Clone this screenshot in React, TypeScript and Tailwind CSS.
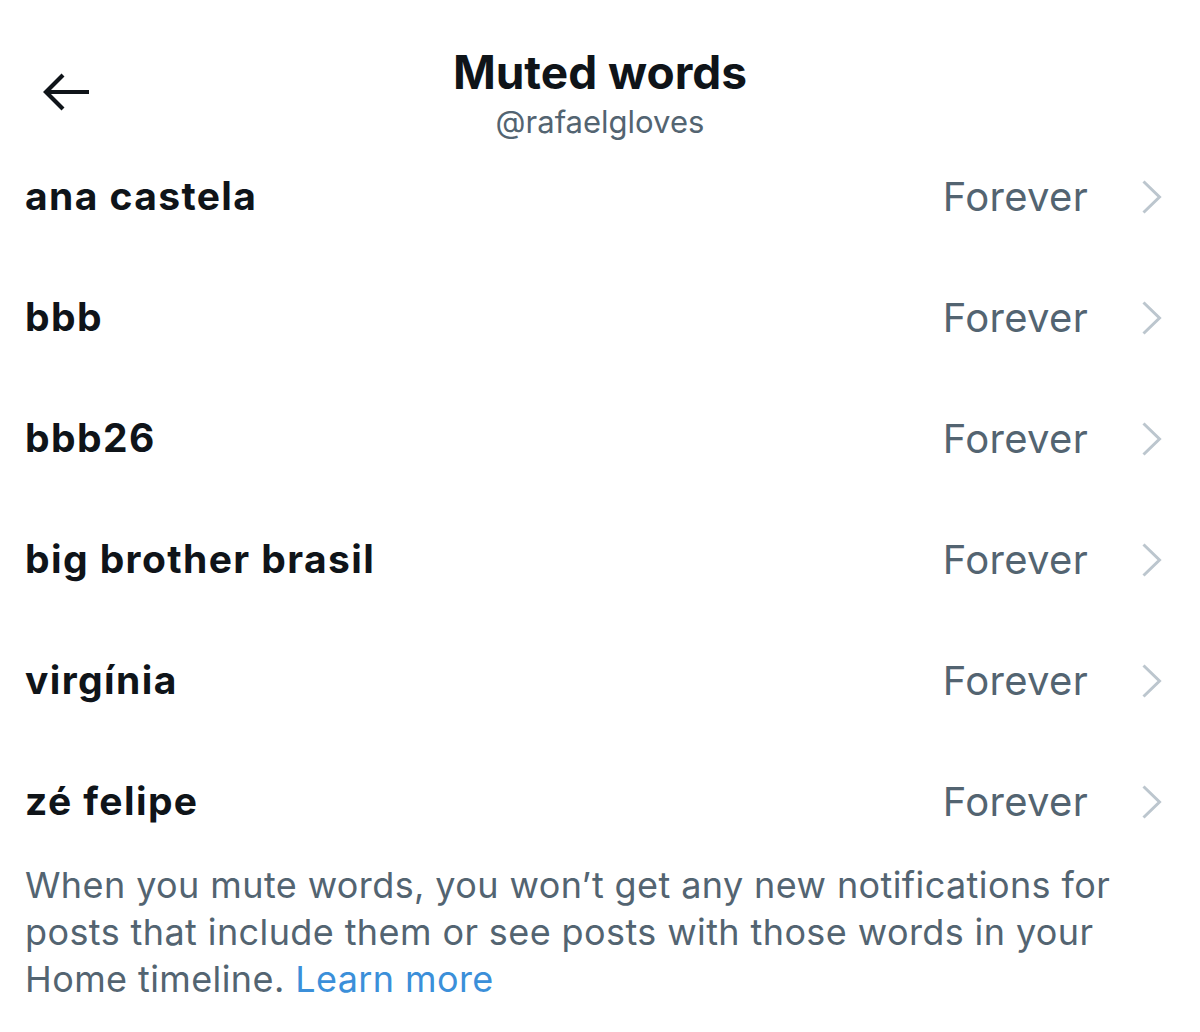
const words = ['ana castela', 'bbb', 'bbb26', 'big brother brasil', 'virgínia', 'zé felipe'];

function BackArrow() {
  return (
    <svg width="50" height="42" viewBox="0 0 50 42" fill="none" stroke="#0f1419" strokeWidth="4.2">
      <path d="M48 21H5M22 4L5 21l17 17" strokeLinejoin="miter" />
    </svg>
  );
}

function Chevron() {
  return (
    <svg width="22" height="36" viewBox="0 0 22 36" fill="none" stroke="#bcc6ce" strokeWidth="3">
      <path d="M2.5 2.5L18.5 18 2.5 33.5" strokeLinejoin="miter" />
    </svg>
  );
}

export default function App() {
  return (
    <div className="w-[1200px] h-[1032px] bg-white overflow-hidden" style={{ fontFamily: 'Inter, "Noto Sans", sans-serif' }}>
      {/* header */}
      <div className="grid grid-cols-[1fr_auto_1fr] h-[136px] pt-[41px]">
        <div className="pl-[41px] pt-[30px]">
          <BackArrow />
        </div>
        <div className="flex flex-col items-center">
          <h1 className="text-[46px] leading-[62px] font-bold text-[#0f1419]">Muted words</h1>
          <div className="text-[31px] leading-[37px] text-[#536471]">@rafaelgloves</div>
        </div>
        <div />
      </div>

      {/* list */}
      <div className="flex flex-col">
        {words.map((w) => (
          <div key={w} className="h-[121px] flex items-center pl-[25px] pr-[37px]">
            <span className="flex-1 text-[39px] font-bold text-[#0f1419] tracking-[1.4px]">{w}</span>
            <span className="text-[40px] text-[#536471] tracking-[0.3px] mr-[53px]">Forever</span>
            <Chevron />
          </div>
        ))}
      </div>

      {/* footer */}
      <p className="pl-[25px] pr-[40px] text-[36px] leading-[47px] text-[#536471] tracking-[0.4px]">
        When you mute words, you won’t get any new notifications for posts that include them or see posts with those words in your Home timeline.{' '}
        <span className="text-[#3b8fd9]">Learn more</span>
      </p>
    </div>
  );
}
